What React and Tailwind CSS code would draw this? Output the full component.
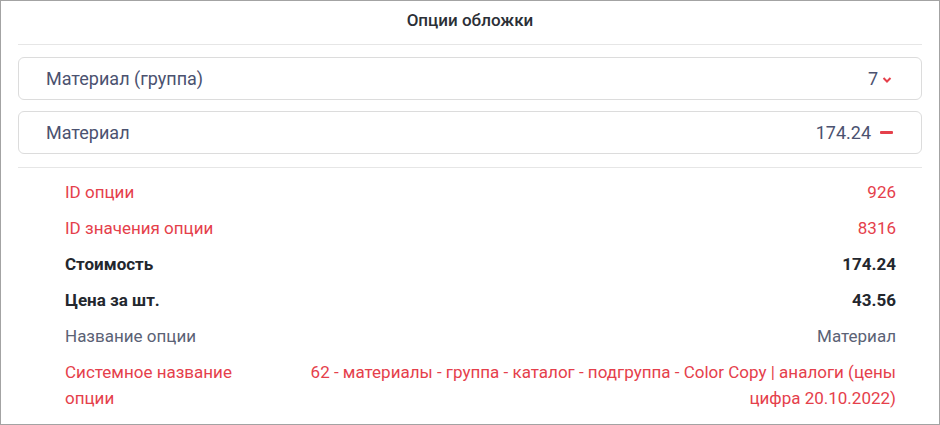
import React from "react";

const red = "text-[#e5404b]";

function Row({ label, value, cls }) {
  return (
    <div className={`flex gap-5 py-[5px] leading-[26px] text-[17px] ${cls}`}>
      <div className="w-[200px] shrink-0">{label}</div>
      <div className="flex-1 text-right">{value}</div>
    </div>
  );
}

export default function App() {
  return (
    <div
      className="w-[940px] h-[425px] bg-white border border-[#a3a3a3] overflow-hidden"
      style={{ fontFamily: "Roboto, 'Noto Sans', sans-serif" }}
    >
      <div className="px-[17px]">
        <div className="h-[44px] flex items-center justify-center text-[17px] font-medium text-[#2b2f36] border-b border-[#e6e6e6] pb-[4px]">
          Опции обложки
        </div>
        <div className="mt-[12px] flex flex-col gap-[11px]">
          <div className="h-[43px] rounded-[6px] border border-[#dcdcdc] flex items-center justify-between pl-[27px] pr-[29px] text-[18px] text-[#4b5270]">
            <span>Материал (группа)</span>
            <span className="flex items-center gap-[4px]">
              <span>7</span>
              <svg width="10" height="8" viewBox="0 0 10 8" className="mt-[2px]">
                <path d="M1.5 2 L5 5.5 L8.5 2" fill="none" stroke="#e5404b" strokeWidth="2" />
              </svg>
            </span>
          </div>
          <div className="h-[43px] rounded-[6px] border border-[#dcdcdc] flex items-center justify-between pl-[27px] pr-[28px] text-[18px] text-[#4b5270]">
            <span>Материал</span>
            <span className="flex items-center gap-[9px]">
              <span>174.24</span>
              <span className="w-[13px] h-[3px] bg-[#e5404b] rounded-[1px]"></span>
            </span>
          </div>
        </div>
        <div className="mt-[13px] border-t border-[#e6e6e6] pt-[6px] pl-[47px] pr-[26px]">
          <Row label="ID опции" value="926" cls={red} />
          <Row label="ID значения опции" value="8316" cls={red} />
          <Row label="Стоимость" value="174.24" cls="text-[#23272e] font-bold" />
          <Row label="Цена за шт." value="43.56" cls="text-[#23272e] font-bold" />
          <Row label="Название опции" value="Материал" cls="text-[#5b6275]" />
          <Row
            label="Системное название опции"
            value="62 - материалы - группа - каталог - подгруппа - Color Copy | аналоги (цены цифра 20.10.2022)"
            cls={red}
          />
        </div>
      </div>
    </div>
  );
}
